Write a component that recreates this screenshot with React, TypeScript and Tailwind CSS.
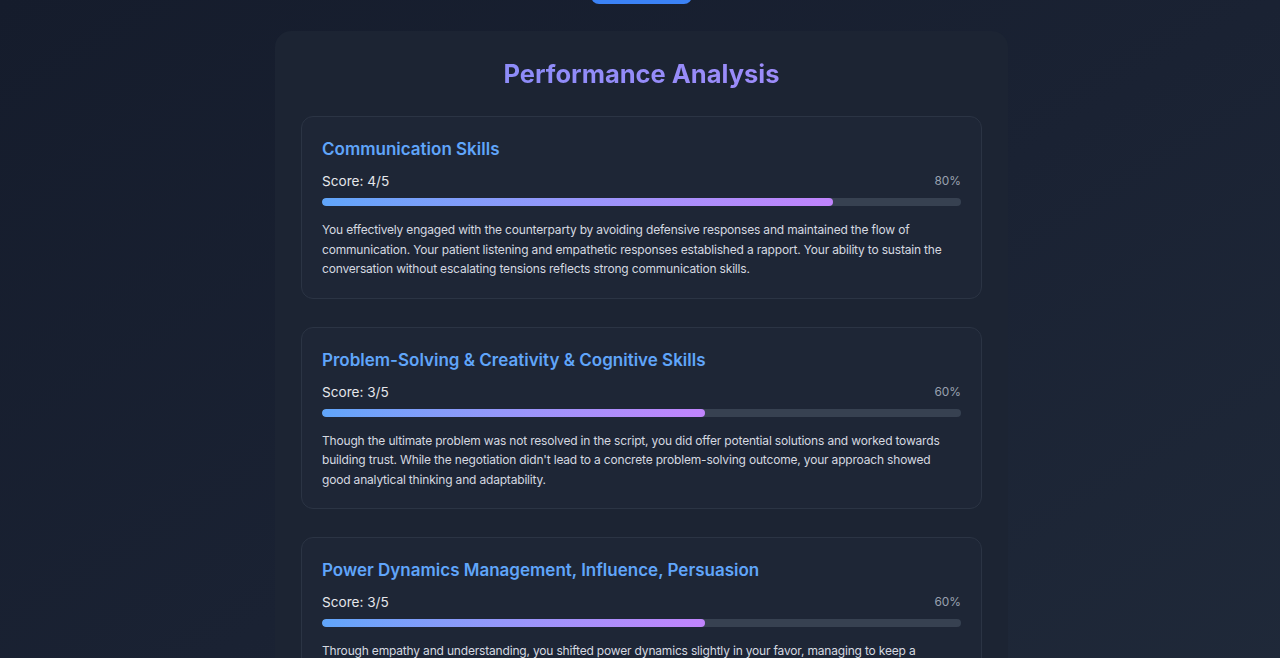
import React from "react";

interface Skill {
	title: string;
	score: number;
	feedback: string;
}

const skills: Skill[] = [
	{
		title: "Communication Skills",
		score: 4,
		feedback:
			"You effectively engaged with the counterparty by avoiding defensive responses and maintained the flow of communication. Your patient listening and empathetic responses established a rapport. Your ability to sustain the conversation without escalating tensions reflects strong communication skills.",
	},
	{
		title: "Problem-Solving & Creativity & Cognitive Skills",
		score: 3,
		feedback:
			"Though the ultimate problem was not resolved in the script, you did offer potential solutions and worked towards building trust. While the negotiation didn't lead to a concrete problem-solving outcome, your approach showed good analytical thinking and adaptability.",
	},
	{
		title: "Power Dynamics Management, Influence, Persuasion",
		score: 3,
		feedback:
			"Through empathy and understanding, you shifted power dynamics slightly in your favor, managing to keep a constructive tone. However, more assertive framing of your position could have increased your influence over the final outcome.",
	},
];

function SkillCard({ skill }: { skill: Skill }) {
	const pct = Math.round((skill.score / 5) * 100);
	return (
		<div className="rounded-xl border border-[#2b3444] bg-[#1e2636] px-5 pt-5 pb-[19px]">
			<h3 className="text-[17px] leading-6 font-semibold text-[#60a5fa]">{skill.title}</h3>
			<div className="mt-[10px] flex items-center justify-between">
				<span className="text-[13.6px] leading-5 text-gray-200">Score: {skill.score}/5</span>
				<span className="text-[11.9px] leading-5 text-gray-400">{pct}%</span>
			</div>
			<div className="mt-[7px] h-2 w-full overflow-hidden rounded-full bg-[#374151]">
				<div
					className="h-full rounded-full bg-gradient-to-r from-[#60a5fa] to-[#c084fc]"
					style={{ width: `${pct}%` }}
				/>
			</div>
			<p className="mt-[14px] text-[12px] leading-[19.5px] tracking-[-0.015em] text-[#d5d9e0]">{skill.feedback}</p>
		</div>
	);
}

export default function App() {
	return (
		<div
			className="min-h-screen w-full bg-gradient-to-br from-[#151c2c] via-[#1a2233] to-[#202a3a] pb-10 pl-[3px]"
			style={{ fontFamily: "Inter, 'Noto Sans', sans-serif" }}
		>
			<div className="flex justify-center">
				<button className="-mt-[36px] h-10 w-[101px] rounded-lg bg-[#3b82f6]" />
			</div>

			<div className="mx-auto mt-[27px] w-[733px] rounded-2xl bg-[#1c2433] px-[26px] pt-[23px] pb-8">
				<h2 className="bg-gradient-to-r from-[#818cf8] to-[#a78bfa] bg-clip-text text-center text-[25.5px] leading-[40px] font-bold text-transparent">
					Performance Analysis
				</h2>

				{/* skills */}
				<div className="mt-[22px] space-y-7">
					{skills.map((s) => (
						<SkillCard key={s.title} skill={s} />
					))}
				</div>
			</div>
		</div>
	);
}
